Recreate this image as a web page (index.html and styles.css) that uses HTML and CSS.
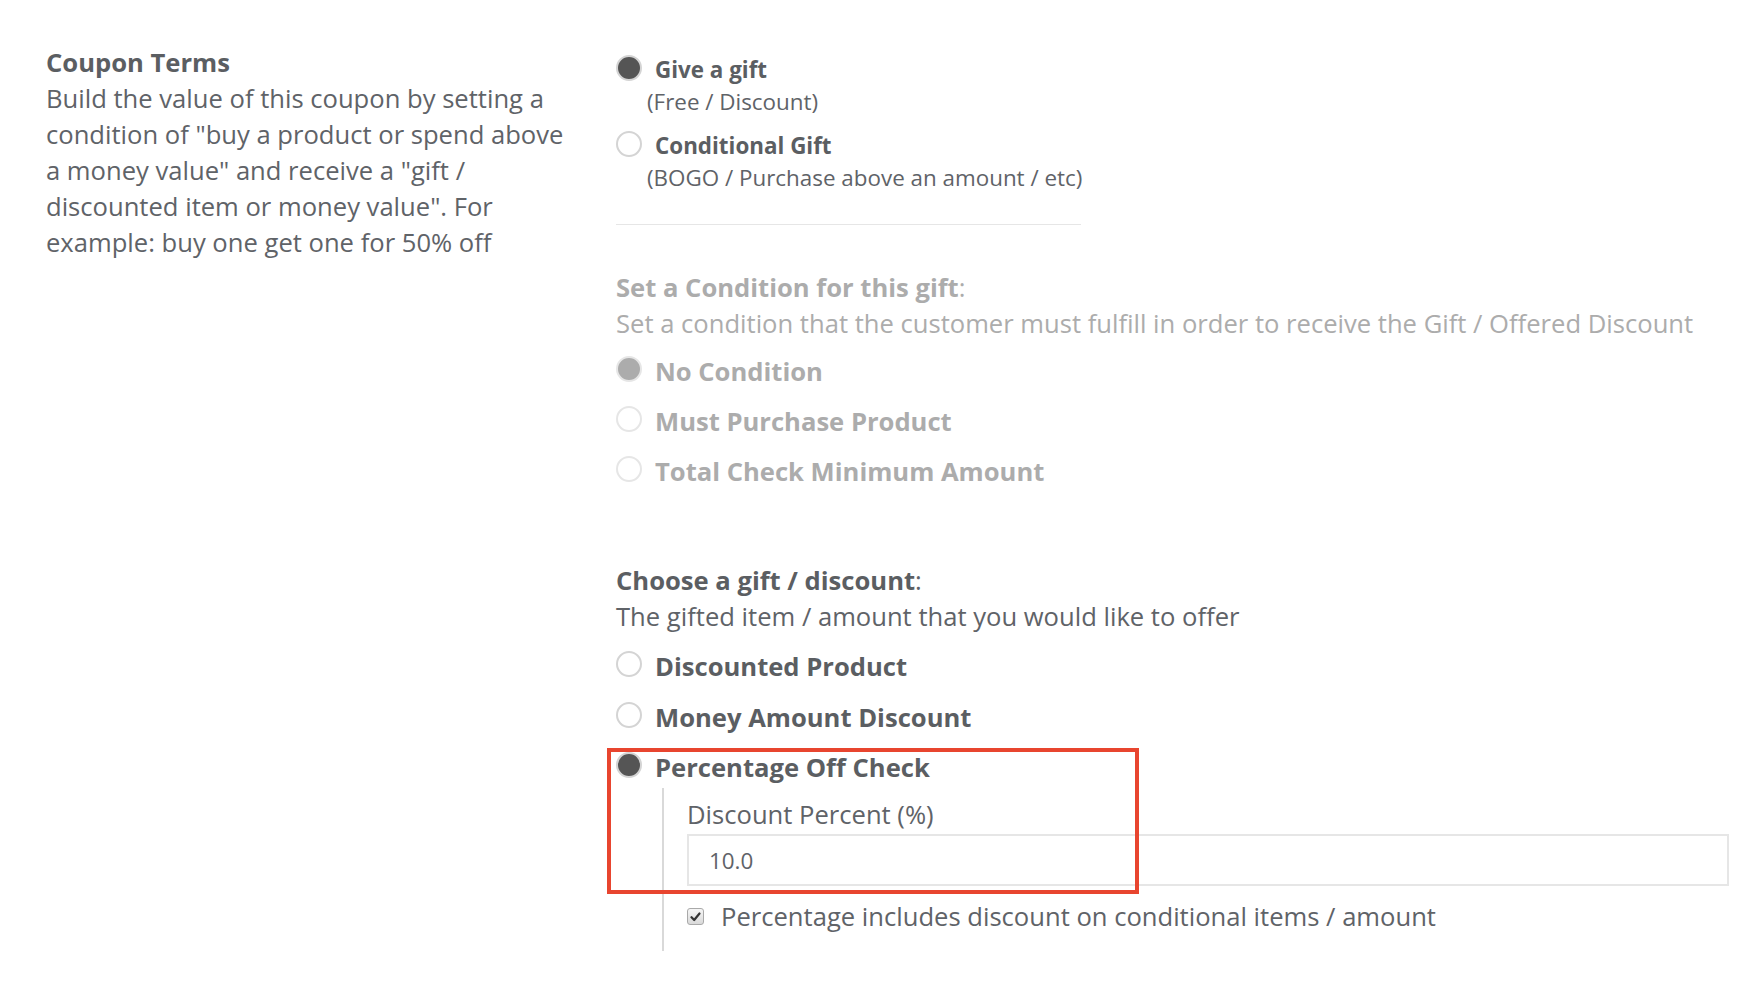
FILE: index.html
```html
<!DOCTYPE html>
<html lang="en">

<head>
    <meta charset="UTF-8">
    <meta name="viewport" content="width=device-width, initial-scale=1.0">
    <title>Coupon Terms</title>
    <link rel="stylesheet" href="styles.css">
</head>

<body>
    <main class="coupon-terms">
        <section class="intro">
            <h2>Coupon Terms</h2>
            <p>Build the value of this coupon by setting a condition of "buy a product or spend above a money value" and receive a "gift / discounted item or money value". For example: buy one get one for 50% off</p>
        </section>

        <section class="builder">
            <div class="gift-type">
                <div class="type-option">
                    <label class="choice choice-small">
                        <input type="radio" class="radio" name="gift_type" checked>
                        <span>Give a gift</span>
                    </label>
                    <div class="hint">(Free / Discount)</div>
                </div>
                <div class="type-option">
                    <label class="choice choice-small">
                        <input type="radio" class="radio" name="gift_type">
                        <span>Conditional Gift</span>
                    </label>
                    <div class="hint">(BOGO / Purchase above an amount / etc)</div>
                </div>
            </div>

            <hr class="divider">

            <!-- condition block is disabled while "Give a gift" is picked -->
            <div class="group group-condition is-disabled">
                <div class="group-title"><strong>Set a Condition for this gift</strong>:</div>
                <div class="group-desc">Set a condition that the customer must fulfill in order to receive the Gift / Offered Discount</div>
                <label class="choice">
                    <input type="radio" class="radio" name="condition" checked disabled>
                    <span>No Condition</span>
                </label>
                <label class="choice">
                    <input type="radio" class="radio" name="condition" disabled>
                    <span>Must Purchase Product</span>
                </label>
                <label class="choice">
                    <input type="radio" class="radio" name="condition" disabled>
                    <span>Total Check Minimum Amount</span>
                </label>
            </div>

            <div class="group group-gift">
                <div class="group-title"><strong>Choose a gift / discount</strong>:</div>
                <div class="group-desc">The gifted item / amount that you would like to offer</div>
                <label class="choice">
                    <input type="radio" class="radio" name="gift">
                    <span>Discounted Product</span>
                </label>
                <label class="choice">
                    <input type="radio" class="radio" name="gift">
                    <span>Money Amount Discount</span>
                </label>
                <div class="choice-block">
                    <label class="choice">
                        <input type="radio" class="radio" name="gift" checked>
                        <span>Percentage Off Check</span>
                    </label>
                    <div class="sub-fields">
                        <label class="field-label" for="discountPercent">Discount Percent (%)</label>
                        <input type="text" id="discountPercent" class="text-input" value="10.0">
                        <label class="check">
                            <span class="checkbox">
                                <svg width="11" height="10" viewBox="0 0 11 10"><path d="M1.5 5.2 L4.2 8 L9.5 1.5" fill="none" stroke="#333" stroke-width="2.2" stroke-linecap="round" stroke-linejoin="round"/></svg>
                            </span>
                            <span>Percentage includes discount on conditional items / amount</span>
                        </label>
                    </div>
                    <div class="highlight"></div>
                </div>
            </div>
        </section>
    </main>
</body>

</html>
```

FILE: styles.css
```css
body {
    font-family: 'Open Sans', 'Liberation Sans', sans-serif;
    margin: 0;
    padding: 0;
    background-color: #fff;
    color: #5f6368;
}

.coupon-terms {
    display: flex;
    gap: 42px;
    padding: 45px 31px 0 46px;
}

/* left column */
.intro {
    width: 528px;
    flex: none;
}

.intro h2 {
    margin: 0;
    font-size: 25.6px;
    line-height: 36px;
    font-weight: 700;
    color: #5b5e62;
}

.intro p {
    margin: 0;
    font-size: 25.6px;
    line-height: 36px;
}

/* right column */
.builder {
    flex: 1;
    padding-top: 9px;
}

.choice {
    display: flex;
    align-items: flex-start;
    gap: 13px;
    font-size: 25.6px;
    line-height: 36px;
    font-weight: 700;
    color: #5b5e62;
    margin-top: 14px;
}

.radio {
    -webkit-appearance: none;
    appearance: none;
    width: 26px;
    height: 26px;
    margin: 2px 0 0;
    flex: none;
    border: 2px solid #d4d4d4;
    border-radius: 50%;
    background-color: #fff;
}

.radio:checked {
    background-color: #555;
}

.choice-small {
    font-size: 22.4px;
    line-height: 31px;
    margin-top: 0;
}

.choice-small .radio {
    margin-top: 1px;
}

.type-option + .type-option {
    margin-top: 11px;
}

.hint {
    padding-left: 31px;
    font-size: 22.4px;
    line-height: 34px;
}

.divider {
    width: 465px;
    margin: 29px 0 0;
    border: 0;
    border-top: 1px solid #e6e6e6;
}

.group-title {
    font-size: 25.6px;
    line-height: 35px;
}

.group-title strong {
    color: #5b5e62;
}

.group-desc {
    font-size: 25.6px;
    line-height: 35px;
    margin-top: 1px;
}

.group-desc + .choice {
    margin-top: 13px;
}

.group-condition {
    margin-top: 45px;
}

.group-gift {
    margin-top: 73px;
}

.group-gift .group-desc + .choice {
    margin-top: 15px;
}

.group-gift .choice:nth-of-type(2) {
    margin-top: 15px;
}

.is-disabled,
.is-disabled .group-title strong,
.is-disabled .choice {
    color: #acacac;
}

.is-disabled .radio {
    border-color: #e6e6e6;
}

.is-disabled .radio:checked {
    background-color: #acacac;
}

/* percentage option with its fields */
.choice-block {
    position: relative;
}

.sub-fields {
    margin: 2px 0 0 46px;
    padding: 9px 0 17px 23px;
    border-left: 2px solid #d9d9d9;
}

.field-label {
    display: block;
    font-size: 25.6px;
    line-height: 35px;
}

.text-input {
    display: block;
    width: 100%;
    height: 52px;
    box-sizing: border-box;
    margin-top: 2px;
    padding: 0 20px;
    border: 2px solid #e6e6e6;
    font-family: inherit;
    font-size: 22.4px;
    color: #5f6368;
    outline: none;
}

.check {
    display: flex;
    align-items: center;
    gap: 17px;
    margin-top: 13px;
    font-size: 25.6px;
    line-height: 35px;
}

.checkbox {
    width: 17px;
    height: 17px;
    box-sizing: border-box;
    flex: none;
    display: flex;
    align-items: center;
    justify-content: center;
    border: 1px solid #a9a9a9;
    border-radius: 3px;
    background: linear-gradient(#f6f6f6, #d9d9d9);
}

/* red callout drawn over the option */
.highlight {
    position: absolute;
    left: -9px;
    top: -2px;
    width: 532px;
    height: 146px;
    box-sizing: border-box;
    border: 4px solid #e8452f;
    pointer-events: none;
}
```
